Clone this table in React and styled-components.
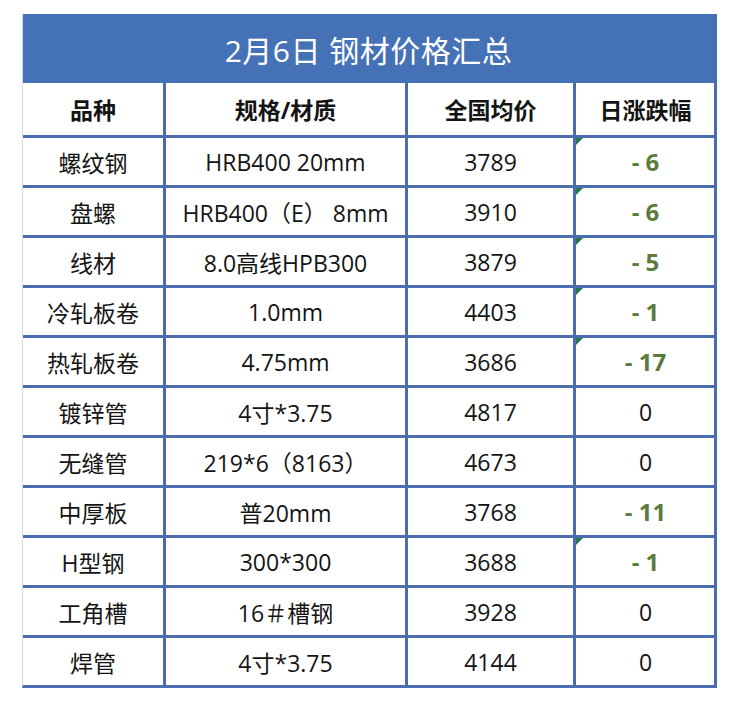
import React from "react";
import styled, { createGlobalStyle } from "styled-components";

const GlobalStyle = createGlobalStyle`
  body {
    margin: 0;
    background: #ffffff;
    font-family: "Open Sans", "Noto Sans CJK SC", sans-serif;
  }
`;

const Page = styled.div`
  padding: 14px 0 0 22px;
`;

const Sheet = styled.div`
  width: 695px;
  box-sizing: border-box;
  border-left: 1px solid #d4d8de;
  border-right: 3px solid #4a6daf;
  border-bottom: 3px solid #4a6daf;
`;

const Title = styled.div`
  height: 69px;
  background: #4571b7;
  color: #ffffff;
  font-size: 30px;
  display: flex;
  align-items: center;
  justify-content: center;
  letter-spacing: 0.5px;
`;

const Grid = styled.div`
  display: grid;
  grid-template-columns: 140px 242px 168px 142px;
`;

const Cell = styled.div`
  position: relative;
  box-sizing: border-box;
  height: ${(p) => (p.$head ? "52px" : "50px")};
  border-top: ${(p) => (p.$head ? "none" : "3px solid #4a6daf")};
  border-left: ${(p) => (p.$first ? "none" : "3px solid #4a6daf")};
  display: flex;
  align-items: center;
  justify-content: center;
  font-size: ${(p) => (p.$change ? "24px" : "23px")};
  font-weight: ${(p) => (p.$head || p.$change ? 700 : 400)};
  color: ${(p) => (p.$change ? "#5b7b3c" : "#141414")};
  white-space: pre;

  &::before {
    content: "";
    display: ${(p) => (p.$flag ? "block" : "none")};
    position: absolute;
    top: 0;
    left: 0;
    border-top: 7px solid #23784a;
    border-right: 7px solid transparent;
  }
`;

const heads = ["品种", "规格/材质", "全国均价", "日涨跌幅"];

const rows = [
  ["螺纹钢", "HRB400 20mm", "3789", -6, true],
  ["盘螺", "HRB400（E） 8mm", "3910", -6, true],
  ["线材", "8.0高线HPB300", "3879", -5, true],
  ["冷轧板卷", "1.0mm", "4403", -1, true],
  ["热轧板卷", "4.75mm", "3686", -17, true],
  ["镀锌管", "4寸*3.75", "4817", 0, false],
  ["无缝管", "219*6（8163）", "4673", 0, false],
  ["中厚板", "普20mm", "3768", -11, false],
  ["H型钢", "300*300", "3688", -1, true],
  ["工角槽", "16＃槽钢", "3928", 0, false],
  ["焊管", "4寸*3.75", "4144", 0, false],
];

const App = () => {
  return (
    <Page>
      <GlobalStyle />
      <Sheet>
        <Title>2月6日 钢材价格汇总</Title>
        <Grid>
          {heads.map((h, i) => (
            <Cell key={h} $head $first={i === 0}>
              {h}
            </Cell>
          ))}
          {rows.map(([name, spec, price, change, flag]) => (
            <React.Fragment key={name}>
              <Cell $first>{name}</Cell>
              <Cell>{spec}</Cell>
              <Cell>{price}</Cell>
              <Cell $change={change !== 0} $flag={flag}>
                {change === 0 ? "0" : `- ${Math.abs(change)}`}
              </Cell>
            </React.Fragment>
          ))}
        </Grid>
      </Sheet>
    </Page>
  );
};

export default App;
